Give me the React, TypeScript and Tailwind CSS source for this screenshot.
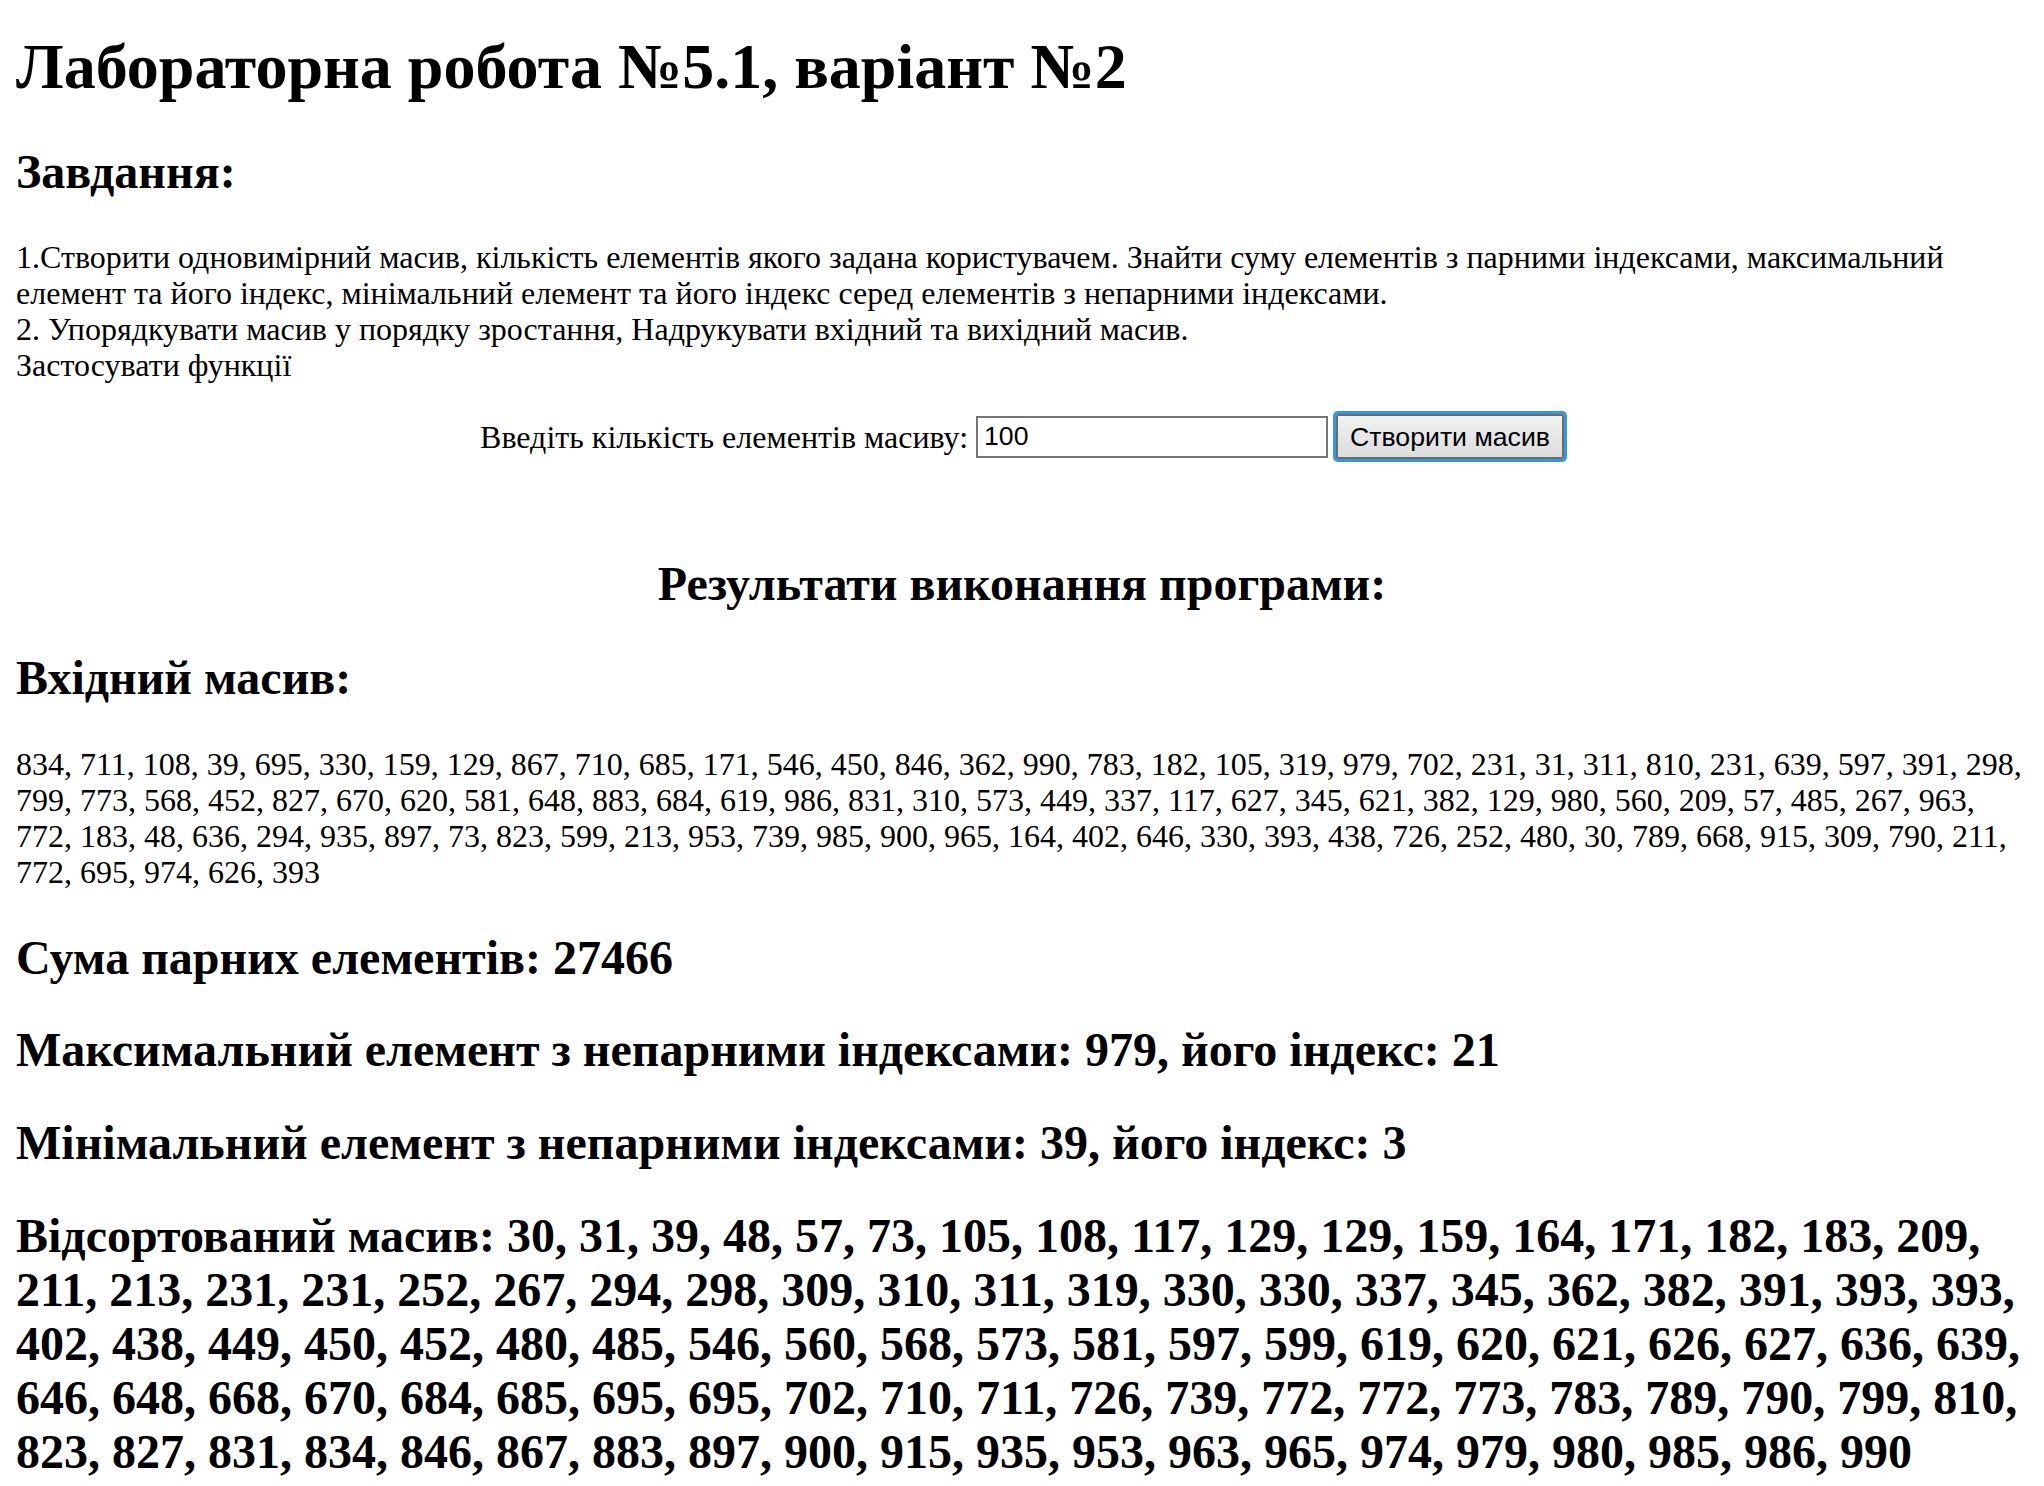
import React from 'react';

const INPUT_ARRAY = [
  834, 711, 108, 39, 695, 330, 159, 129, 867, 710, 685, 171, 546, 450, 846, 362, 990, 783, 182, 105, 319, 979, 702, 231, 31, 311, 810, 231, 639, 597, 391, 298,
  799, 773, 568, 452, 827, 670, 620, 581, 648, 883, 684, 619, 986, 831, 310, 573, 449, 337, 117, 627, 345, 621, 382, 129, 980, 560, 209, 57, 485, 267, 963,
  772, 183, 48, 636, 294, 935, 897, 73, 823, 599, 213, 953, 739, 985, 900, 965, 164, 402, 646, 330, 393, 438, 726, 252, 480, 30, 789, 668, 915, 309, 790, 211,
  772, 695, 974, 626, 393,
];

const SORTED = [...INPUT_ARRAY].sort((a, b) => a - b);

export default function App() {
  return (
    <div className="min-h-screen bg-white px-[16px] pt-[31px] pb-[10px] font-['Liberation_Serif','Times_New_Roman',serif] text-black">
      <h1 className="text-[64px] font-bold leading-[72px] mb-[42px]">
        Лабораторна робота №5.1, варіант №2
      </h1>

      <h2 className="text-[48px] font-bold leading-[54px] mb-[40px]">Завдання:</h2>

      <p className="text-[32px] leading-[36px]">
        1.Створити одновимірний масив, кількість елементів якого задана користувачем. Знайти суму елементів з парними індексами, максимальний елемент та його індекс, мінімальний елемент та його індекс серед елементів з непарними індексами.
        <br />
        2. Упорядкувати масив у порядку зростання, Надрукувати вхідний та вихідний масив.
        <br />
        Застосувати функції
      </p>

      <div className="mt-[31px] flex items-center justify-center gap-[8px] text-[32px] leading-[36px]">
        <label htmlFor="count">Введіть кількість елементів масиву:</label>
        <input
          id="count"
          defaultValue="100"
          className="w-[352px] h-[42px] border-2 border-[#767676] bg-white px-[6px] font-['Liberation_Sans',Arial,sans-serif] text-[26.67px] text-black outline-none"
        />
        <button className="h-[45px] px-[12px] border-2 border-[#6b6b6b] ring-[3px] ring-[#3498db] rounded-[2px] bg-gradient-to-b from-[#f2f2f2] to-[#dcdcdc] font-['Liberation_Sans',Arial,sans-serif] text-[26.67px] text-black">
          Створити масив
        </button>
      </div>

      <h2 className="mt-[98px] text-center text-[48px] font-bold leading-[54px]">
        Результати виконання програми:
      </h2>

      <h2 className="mt-[40px] text-[48px] font-bold leading-[54px]">Вхідний масив:</h2>

      <p className="mt-[41px] text-[32px] leading-[36px]">{INPUT_ARRAY.join(', ')}</p>

      <h2 className="mt-[41px] text-[48px] font-bold leading-[54px]">Сума парних елементів: 27466</h2>
      <h2 className="mt-[38px] text-[48px] font-bold leading-[54px]">
        Максимальний елемент з непарними індексами: 979, його індекс: 21
      </h2>
      <h2 className="mt-[39px] text-[48px] font-bold leading-[54px]">
        Мінімальний елемент з непарними індексами: 39, його індекс: 3
      </h2>
      <h2 className="mt-[39px] text-[48px] font-bold leading-[54px]">
        Відсортований масив: {SORTED.join(', ')}
      </h2>
    </div>
  );
}
